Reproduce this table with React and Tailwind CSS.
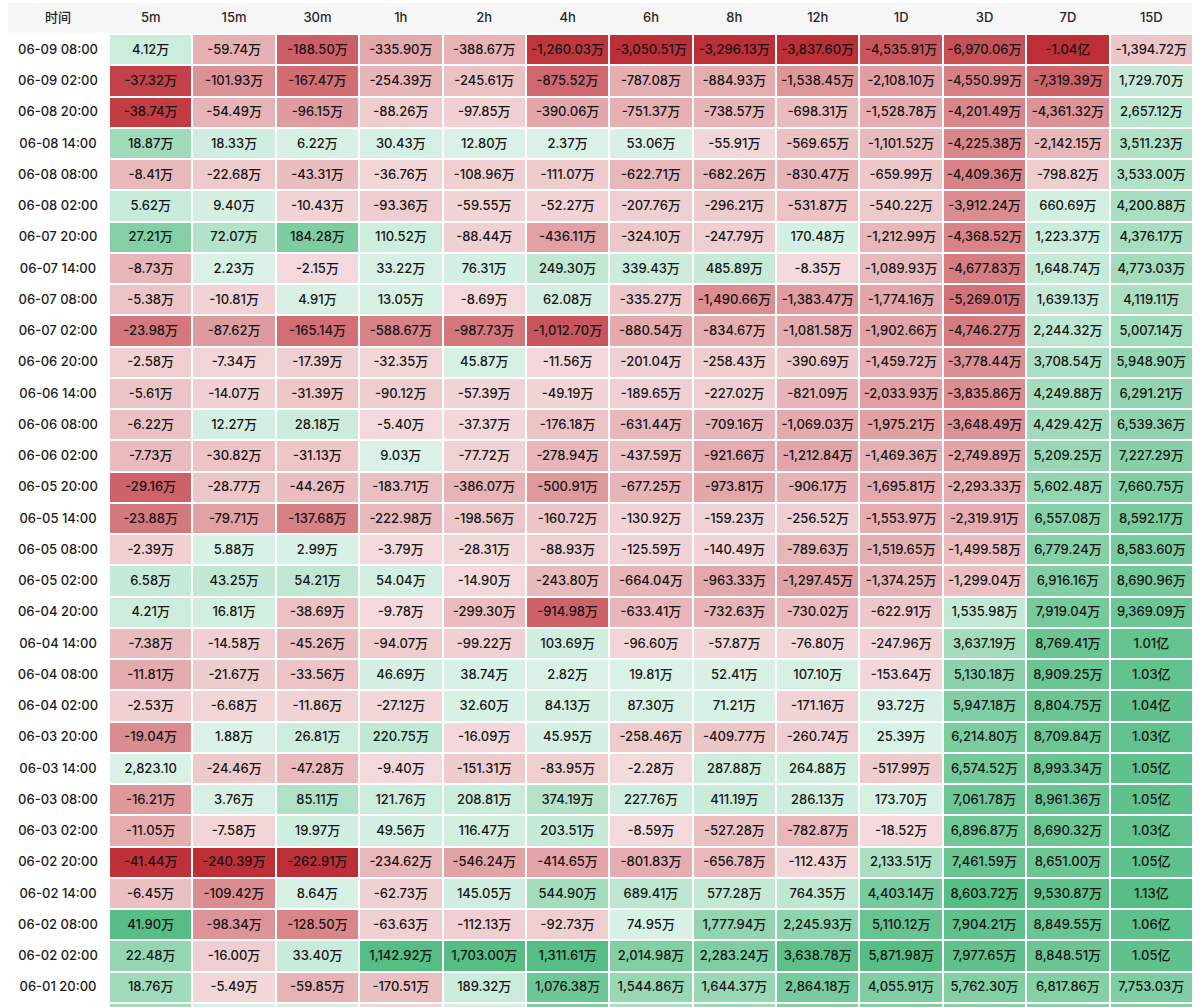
import React from "react";

const COLS = ["5m", "15m", "30m", "1h", "2h", "4h", "6h", "8h", "12h", "1D", "3D", "7D", "15D"];

// each row: time, then 13 display values
const ROWS = [
  ["06-09 08:00", "4.12万", "-59.74万", "-188.50万", "-335.90万", "-388.67万", "-1,260.03万", "-3,050.51万", "-3,296.13万", "-3,837.60万", "-4,535.91万", "-6,970.06万", "-1.04亿", "-1,394.72万"],
  ["06-09 02:00", "-37.32万", "-101.93万", "-167.47万", "-254.39万", "-245.61万", "-875.52万", "-787.08万", "-884.93万", "-1,538.45万", "-2,108.10万", "-4,550.99万", "-7,319.39万", "1,729.70万"],
  ["06-08 20:00", "-38.74万", "-54.49万", "-96.15万", "-88.26万", "-97.85万", "-390.06万", "-751.37万", "-738.57万", "-698.31万", "-1,528.78万", "-4,201.49万", "-4,361.32万", "2,657.12万"],
  ["06-08 14:00", "18.87万", "18.33万", "6.22万", "30.43万", "12.80万", "2.37万", "53.06万", "-55.91万", "-569.65万", "-1,101.52万", "-4,225.38万", "-2,142.15万", "3,511.23万"],
  ["06-08 08:00", "-8.41万", "-22.68万", "-43.31万", "-36.76万", "-108.96万", "-111.07万", "-622.71万", "-682.26万", "-830.47万", "-659.99万", "-4,409.36万", "-798.82万", "3,533.00万"],
  ["06-08 02:00", "5.62万", "9.40万", "-10.43万", "-93.36万", "-59.55万", "-52.27万", "-207.76万", "-296.21万", "-531.87万", "-540.22万", "-3,912.24万", "660.69万", "4,200.88万"],
  ["06-07 20:00", "27.21万", "72.07万", "184.28万", "110.52万", "-88.44万", "-436.11万", "-324.10万", "-247.79万", "170.48万", "-1,212.99万", "-4,368.52万", "1,223.37万", "4,376.17万"],
  ["06-07 14:00", "-8.73万", "2.23万", "-2.15万", "33.22万", "76.31万", "249.30万", "339.43万", "485.89万", "-8.35万", "-1,089.93万", "-4,677.83万", "1,648.74万", "4,773.03万"],
  ["06-07 08:00", "-5.38万", "-10.81万", "4.91万", "13.05万", "-8.69万", "62.08万", "-335.27万", "-1,490.66万", "-1,383.47万", "-1,774.16万", "-5,269.01万", "1,639.13万", "4,119.11万"],
  ["06-07 02:00", "-23.98万", "-87.62万", "-165.14万", "-588.67万", "-987.73万", "-1,012.70万", "-880.54万", "-834.67万", "-1,081.58万", "-1,902.66万", "-4,746.27万", "2,244.32万", "5,007.14万"],
  ["06-06 20:00", "-2.58万", "-7.34万", "-17.39万", "-32.35万", "45.87万", "-11.56万", "-201.04万", "-258.43万", "-390.69万", "-1,459.72万", "-3,778.44万", "3,708.54万", "5,948.90万"],
  ["06-06 14:00", "-5.61万", "-14.07万", "-31.39万", "-90.12万", "-57.39万", "-49.19万", "-189.65万", "-227.02万", "-821.09万", "-2,033.93万", "-3,835.86万", "4,249.88万", "6,291.21万"],
  ["06-06 08:00", "-6.22万", "12.27万", "28.18万", "-5.40万", "-37.37万", "-176.18万", "-631.44万", "-709.16万", "-1,069.03万", "-1,975.21万", "-3,648.49万", "4,429.42万", "6,539.36万"],
  ["06-06 02:00", "-7.73万", "-30.82万", "-31.13万", "9.03万", "-77.72万", "-278.94万", "-437.59万", "-921.66万", "-1,212.84万", "-1,469.36万", "-2,749.89万", "5,209.25万", "7,227.29万"],
  ["06-05 20:00", "-29.16万", "-28.77万", "-44.26万", "-183.71万", "-386.07万", "-500.91万", "-677.25万", "-973.81万", "-906.17万", "-1,695.81万", "-2,293.33万", "5,602.48万", "7,660.75万"],
  ["06-05 14:00", "-23.88万", "-79.71万", "-137.68万", "-222.98万", "-198.56万", "-160.72万", "-130.92万", "-159.23万", "-256.52万", "-1,553.97万", "-2,319.91万", "6,557.08万", "8,592.17万"],
  ["06-05 08:00", "-2.39万", "5.88万", "2.99万", "-3.79万", "-28.31万", "-88.93万", "-125.59万", "-140.49万", "-789.63万", "-1,519.65万", "-1,499.58万", "6,779.24万", "8,583.60万"],
  ["06-05 02:00", "6.58万", "43.25万", "54.21万", "54.04万", "-14.90万", "-243.80万", "-664.04万", "-963.33万", "-1,297.45万", "-1,374.25万", "-1,299.04万", "6,916.16万", "8,690.96万"],
  ["06-04 20:00", "4.21万", "16.81万", "-38.69万", "-9.78万", "-299.30万", "-914.98万", "-633.41万", "-732.63万", "-730.02万", "-622.91万", "1,535.98万", "7,919.04万", "9,369.09万"],
  ["06-04 14:00", "-7.38万", "-14.58万", "-45.26万", "-94.07万", "-99.22万", "103.69万", "-96.60万", "-57.87万", "-76.80万", "-247.96万", "3,637.19万", "8,769.41万", "1.01亿"],
  ["06-04 08:00", "-11.81万", "-21.67万", "-33.56万", "46.69万", "38.74万", "2.82万", "19.81万", "52.41万", "107.10万", "-153.64万", "5,130.18万", "8,909.25万", "1.03亿"],
  ["06-04 02:00", "-2.53万", "-6.68万", "-11.86万", "-27.12万", "32.60万", "84.13万", "87.30万", "71.21万", "-171.16万", "93.72万", "5,947.18万", "8,804.75万", "1.04亿"],
  ["06-03 20:00", "-19.04万", "1.88万", "26.81万", "220.75万", "-16.09万", "45.95万", "-258.46万", "-409.77万", "-260.74万", "25.39万", "6,214.80万", "8,709.84万", "1.03亿"],
  ["06-03 14:00", "2,823.10", "-24.46万", "-47.28万", "-9.40万", "-151.31万", "-83.95万", "-2.28万", "287.88万", "264.88万", "-517.99万", "6,574.52万", "8,993.34万", "1.05亿"],
  ["06-03 08:00", "-16.21万", "3.76万", "85.11万", "121.76万", "208.81万", "374.19万", "227.76万", "411.19万", "286.13万", "173.70万", "7,061.78万", "8,961.36万", "1.05亿"],
  ["06-03 02:00", "-11.05万", "-7.58万", "19.97万", "49.56万", "116.47万", "203.51万", "-8.59万", "-527.28万", "-782.87万", "-18.52万", "6,896.87万", "8,690.32万", "1.03亿"],
  ["06-02 20:00", "-41.44万", "-240.39万", "-262.91万", "-234.62万", "-546.24万", "-414.65万", "-801.83万", "-656.78万", "-112.43万", "2,133.51万", "7,461.59万", "8,651.00万", "1.05亿"],
  ["06-02 14:00", "-6.45万", "-109.42万", "8.64万", "-62.73万", "145.05万", "544.90万", "689.41万", "577.28万", "764.35万", "4,403.14万", "8,603.72万", "9,530.87万", "1.13亿"],
  ["06-02 08:00", "41.90万", "-98.34万", "-128.50万", "-63.63万", "-112.13万", "-92.73万", "74.95万", "1,777.94万", "2,245.93万", "5,110.12万", "7,904.21万", "8,849.55万", "1.06亿"],
  ["06-02 02:00", "22.48万", "-16.00万", "33.40万", "1,142.92万", "1,703.00万", "1,311.61万", "2,014.98万", "2,283.24万", "3,638.78万", "5,871.98万", "7,977.65万", "8,848.51万", "1.05亿"],
  ["06-01 20:00", "18.76万", "-5.49万", "-59.85万", "-170.51万", "189.32万", "1,076.38万", "1,544.86万", "1,644.37万", "2,864.18万", "4,055.91万", "5,762.30万", "6,817.86万", "7,753.03万"],
  ["06-01 14:00", "17.52万", "3.18万", "12.40万", "-40.12万", "60.25万", "902.44万", "1,102.37万", "1,498.20万", "2,402.66万", "4,011.58万", "5,503.91万", "6,402.12万", "7,401.85万"],
];

// value in 万
const parse = (s) => {
  const n = parseFloat(s.replace(/,/g, ""));
  if (s.endsWith("亿")) return n * 10000;
  if (s.endsWith("万")) return n;
  return n / 10000;
};

const maxAbs = COLS.map((_, c) =>
  Math.max(...ROWS.map((r) => Math.abs(parse(r[c + 1]))))
);

const RED_LO = [243, 218, 220];
const RED_HI = [189, 47, 55];
const GREEN_LO = [218, 242, 230];
const GREEN_HI = [86, 189, 132];

const mix = (a, b, t) =>
  `rgb(${a.map((v, i) => Math.round(v + (b[i] - v) * t)).join(",")})`;

const cellColor = (v, max) => {
  const t = Math.min(1, Math.abs(v) / max);
  return v < 0 ? mix(RED_LO, RED_HI, t) : mix(GREEN_LO, GREEN_HI, t);
};

const GRID = "grid grid-cols-[100px_repeat(13,minmax(0,1fr))] gap-x-[2px]";

export default function App() {
  return (
    <div
      className="min-h-screen bg-white px-2 pt-[3px] text-[13px] font-medium text-[#161616]"
      style={{ fontFamily: 'Inter, "Noto Sans CJK SC", sans-serif' }}
    >
      <div className={`${GRID} h-[30px] items-center bg-[#f6f6f6] text-[#262626]`}>
        <div className="text-center">时间</div>
        {COLS.map((c) => (
          <div key={c} className="text-center">{c}</div>
        ))}
      </div>

      <div className={`${GRID} mt-[2px] auto-rows-[29.25px] gap-y-[2px]`}>
        {ROWS.map((row) => (
          <React.Fragment key={row[0]}>
            <div className="flex items-center justify-center whitespace-nowrap text-[#1c1c1c]">
              {row[0]}
            </div>
            {row.slice(1).map((val, i) => (
              <div
                key={i}
                className="flex items-center justify-center whitespace-nowrap"
                style={{ backgroundColor: cellColor(parse(val), maxAbs[i]) }}
              >
                {val}
              </div>
            ))}
          </React.Fragment>
        ))}
      </div>
    </div>
  );
}
